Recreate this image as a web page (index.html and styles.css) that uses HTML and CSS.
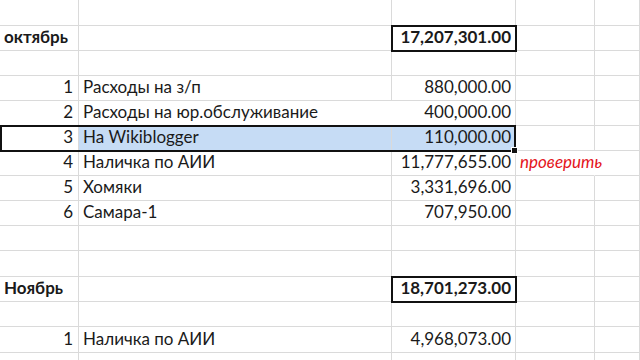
FILE: index.html
```html
<!DOCTYPE html>
<html lang="ru">
<head>
<meta charset="utf-8">
<link rel="stylesheet" href="styles.css">
</head>
<body>
<div class="sheet">
  <div class="row r26"><div class="c a"></div><div class="c b"></div><div class="c n"></div><div class="c d"></div><div class="c e"></div></div>
  <div class="row"><div class="c a bold">октябрь</div><div class="c b"></div><div class="c n bold total">17,207,301.00</div><div class="c d"></div><div class="c e"></div></div>
  <div class="row"><div class="c a"></div><div class="c b"></div><div class="c n"></div><div class="c d"></div><div class="c e"></div></div>
  <div class="row"><div class="c a num">1</div><div class="c b">Расходы на з/п</div><div class="c n">880,000.00</div><div class="c d"></div><div class="c e"></div></div>
  <div class="row"><div class="c a num">2</div><div class="c b over">Расходы на юр.обслуживание</div><div class="c n">400,000.00</div><div class="c d"></div><div class="c e"></div></div>
  <div class="row"><div class="c a num">3</div><div class="c b sel">На Wikiblogger</div><div class="c n sel">110,000.00</div><div class="c d"></div><div class="c e"></div><div class="selection"></div></div>
  <div class="row"><div class="c a num">4</div><div class="c b">Наличка по АИИ</div><div class="c n">11,777,655.00</div><div class="c d note">проверить</div><div class="c e"></div></div>
  <div class="row"><div class="c a num">5</div><div class="c b">Хомяки</div><div class="c n">3,331,696.00</div><div class="c d"></div><div class="c e"></div></div>
  <div class="row"><div class="c a num">6</div><div class="c b">Самара-1</div><div class="c n">707,950.00</div><div class="c d"></div><div class="c e"></div></div>
  <div class="row"><div class="c a"></div><div class="c b"></div><div class="c n"></div><div class="c d"></div><div class="c e"></div></div>
  <div class="row r26"><div class="c a"></div><div class="c b"></div><div class="c n"></div><div class="c d"></div><div class="c e"></div></div>
  <div class="row"><div class="c a bold">Ноябрь</div><div class="c b"></div><div class="c n bold total">18,701,273.00</div><div class="c d"></div><div class="c e"></div></div>
  <div class="row"><div class="c a"></div><div class="c b"></div><div class="c n"></div><div class="c d"></div><div class="c e"></div></div>
  <div class="row r26"><div class="c a num">1</div><div class="c b">Наличка по АИИ</div><div class="c n">4,968,073.00</div><div class="c d"></div><div class="c e"></div></div>
  <div class="row"><div class="c a"></div><div class="c b"></div><div class="c n"></div><div class="c d"></div><div class="c e"></div></div>
</div>
</body>
</html>
```

FILE: styles.css
```css
html, body {
  margin: 0;
  padding: 0;
  background: #fff;
  overflow: hidden;
}
.sheet {
  width: 640px;
  height: 360px;
  overflow: hidden;
  font-family: Lato, "Noto Sans", sans-serif;
  font-size: 17px;
  color: #1a1a1a;
}
.row {
  display: grid;
  grid-template-columns: 79px 313px 124px 79px 1fr;
  grid-template-rows: 100%;
  height: 25px;
  position: relative;
}
.row.r26 { height: 26px; }
.c {
  grid-row: 1;
  border-right: 1px solid #dadada;
  border-bottom: 1px solid #dadada;
  display: flex;
  align-items: flex-end;
  padding: 0 4px 3px 4px;
  white-space: nowrap;
  min-width: 0;
  line-height: 20px;
}
.c.a { grid-column: 1; padding-left: 4px; padding-right: 5px; }
.c.b { grid-column: 2; padding-left: 4px; }
.c.n { grid-column: 3; justify-content: flex-end; padding-right: 4px; }
.c.d { grid-column: 4; }
.c.e { grid-column: 5; }
.num { justify-content: flex-end; }
.bold { font-weight: 700; }
.over { overflow: visible; position: relative; z-index: 1; border-right-color: transparent; }
.total {
  outline: 2px solid #111;
  outline-offset: -1px;
  position: relative;
  z-index: 2;
}
.sel { background: #c6dcf5; }
.selection {
  grid-column: 1 / 4;
  grid-row: 1;
  border: 2px solid #111;
  margin: -1px 0 -1px 0;
  position: relative;
  z-index: 3;
}
.selection::after {
  content: "";
  position: absolute;
  right: -4px;
  bottom: -4px;
  width: 5px;
  height: 5px;
  background: #111;
  border: 1px solid #fff;
}
.note {
  color: #e4141b;
  font-style: italic;
  overflow: visible;
  border-right-color: transparent;
}
```
